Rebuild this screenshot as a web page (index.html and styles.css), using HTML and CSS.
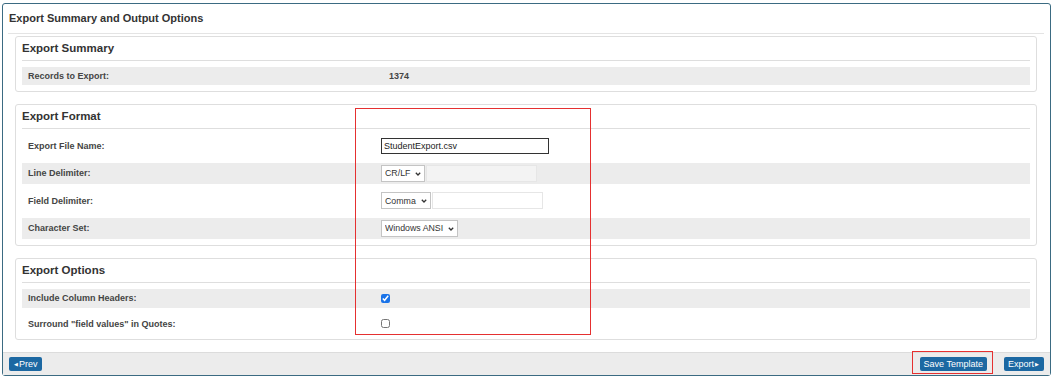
FILE: index.html
```html
<!DOCTYPE html>
<html lang="en">
<head>
    <meta charset="UTF-8">
    <meta name="viewport" content="width=device-width, initial-scale=1.0">
    <title>Export Summary and Output Options</title>
    <link rel="stylesheet" href="styles.css">
</head>
<body>
    <div class="box">
        <div class="box-head">
            <h1>Export Summary and Output Options</h1>
        </div>
        <div class="box-body">
            <div class="panel">
                <h2>Export Summary</h2>
                <div class="rows">
                    <div class="row shade">
                        <div class="label">Records to Export:</div>
                        <div class="value count">1374</div>
                    </div>
                </div>
            </div>

            <div class="panel">
                <h2>Export Format</h2>
                <div class="rows tall">
                    <div class="row">
                        <div class="label">Export File Name:</div>
                        <div class="value"><input class="file-name" type="text" value="StudentExport.csv"></div>
                    </div>
                    <div class="row shade">
                        <div class="label">Line Delimiter:</div>
                        <div class="value">
                            <span class="pick w-crlf">
                                <select class="sel"><option>CR/LF</option></select>
                                <svg class="chev" width="6" height="4" viewBox="0 0 6 4"><path d="M0.8 0.8l2.2 2.2 2.2-2.2" fill="none" stroke="#333" stroke-width="1.3"/></svg>
                            </span><input class="extra off" type="text" disabled>
                        </div>
                    </div>
                    <div class="row">
                        <div class="label">Field Delimiter:</div>
                        <div class="value">
                            <span class="pick w-comma">
                                <select class="sel"><option>Comma</option></select>
                                <svg class="chev" width="6" height="4" viewBox="0 0 6 4"><path d="M0.8 0.8l2.2 2.2 2.2-2.2" fill="none" stroke="#333" stroke-width="1.3"/></svg>
                            </span><input class="extra" type="text">
                        </div>
                    </div>
                    <div class="row shade">
                        <div class="label">Character Set:</div>
                        <div class="value">
                            <span class="pick w-charset">
                                <select class="sel"><option>Windows ANSI</option></select>
                                <svg class="chev" width="6" height="4" viewBox="0 0 6 4"><path d="M0.8 0.8l2.2 2.2 2.2-2.2" fill="none" stroke="#333" stroke-width="1.3"/></svg>
                            </span>
                        </div>
                    </div>
                </div>
            </div>

            <div class="panel">
                <h2>Export Options</h2>
                <div class="rows checks">
                    <div class="row shade">
                        <div class="label">Include Column Headers:</div>
                        <div class="value"><input type="checkbox" checked></div>
                    </div>
                    <div class="row">
                        <div class="label">Surround "field values" in Quotes:</div>
                        <div class="value"><input type="checkbox"></div>
                    </div>
                </div>
            </div>
        </div>
        <div class="box-foot">
            <button class="btn"><span class="tri">&#9664;</span>Prev</button>
            <div class="foot-right">
                <span class="marked">
                    <button class="btn">Save Template</button>
                    <span class="mark"></span>
                </span>
                <button class="btn">Export<span class="tri">&#9654;</span></button>
            </div>
        </div>
        <!-- annotation drawn over the format/options values -->
        <div class="callout"></div>
    </div>
</body>
</html>
```

FILE: styles.css
```css
body { margin: 0; padding: 3px 0 0 2px; font-family: "Liberation Sans", Arial, sans-serif; color: #333; background: #fff; }

.box {
    position: relative;
    width: 1047px;
    border: 1px solid #3b6b82;
    border-radius: 3px;
    background: #fff;
}
.box-head { padding: 0 6px 0 5px; }
.box-head h1 {
    margin: 0;
    font-size: 11px;
    font-weight: bold;
    line-height: 29px;
    padding-left: 1px;
    border-bottom: 1px solid #e4e4e4;
}
.box-body { padding: 2px 13px 12px 12px; }

.panel {
    border: 1px solid #dedede;
    border-radius: 3px;
    padding: 0 6px 6px;
    margin-bottom: 12px;
}
.panel:last-child { margin-bottom: 0; }
.panel h2 {
    margin: 0;
    font-size: 11.5px;
    font-weight: bold;
    line-height: 23px;
    border-bottom: 1px solid #dedede;
}

.rows { display: flex; flex-direction: column; gap: 6.5px; padding-top: 6px; }
.row {
    display: grid;
    grid-template-columns: 359px 1fr;
    align-items: center;
    min-height: 18px;
}
.rows.tall .row { min-height: 21px; }
.rows.checks .row { min-height: 19px; }
.shade { background: #ececec; }
.label { padding-left: 6px; font-size: 9px; font-weight: bold; color: #444; }
.value { display: flex; align-items: center; font-size: 9px; }
.count { padding-left: 8px; font-weight: bold; color: #444; }

.file-name {
    width: 162px;
    height: 12px;
    margin: 0;
    padding: 1px 2px;
    border: 1.5px solid #333;
    font: 9px "Liberation Sans", Arial, sans-serif;
    color: #222;
}
.pick { position: relative; display: flex; }
.w-crlf { width: 44px; }
.w-comma { width: 50px; }
.w-charset { width: 77px; }
.sel {
    -webkit-appearance: none;
    appearance: none;
    width: 100%;
    height: 17px;
    margin: 0;
    padding: 0 0 0 3px;
    border: 1px solid #c4c4c4;
    border-radius: 0;
    background: #fff;
    font: 8.8px "Liberation Sans", Arial, sans-serif;
    color: #333;
}
.chev { position: absolute; right: 4px; top: 7px; pointer-events: none; }
.extra {
    width: 109px;
    height: 15px;
    margin: 0 0 0 1px;
    padding: 0;
    border: 1px solid #e6e6e6;
    background: #fff;
}
.extra.off { background: #f3f3f3; }
input[type="checkbox"] {
    width: 9px;
    height: 9px;
    margin: 0;
    accent-color: #1a73e8;
}

.box-foot {
    display: flex;
    justify-content: space-between;
    align-items: center;
    height: 22px;
    padding: 0 6px;
    border-top: 1px solid #dcdcdc;
    background: #ececec;
}
.foot-right { display: flex; align-items: center; gap: 17px; }
.btn {
    height: 14px;
    padding: 0 4px;
    border: none;
    border-radius: 2px;
    background: #1c68a2;
    color: #fff;
    font: 9px "Liberation Sans", Arial, sans-serif;
    line-height: 14px;
}
.tri { font-size: 5px; vertical-align: 1px; margin: 0 1px; }
.marked { position: relative; display: flex; }
.mark {
    position: absolute;
    top: -6px;
    bottom: -3px;
    left: -8px;
    right: -6px;
    border: 1.5px solid #e53030;
}
.callout {
    position: absolute;
    left: 352px;
    top: 104px;
    width: 234px;
    height: 225px;
    border: 1.5px solid #e53030;
}
```
